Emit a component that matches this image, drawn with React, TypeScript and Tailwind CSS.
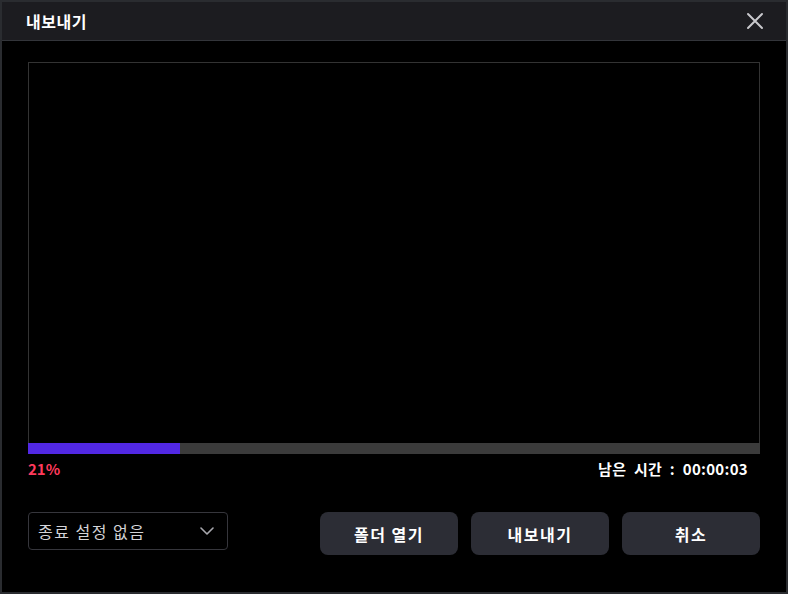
import React from "react";

const font = { fontFamily: '"Noto Sans CJK KR", "Noto Sans", sans-serif' };

function CloseIcon() {
  return (
    <svg width="18" height="18" viewBox="0 0 18 18" fill="none">
      <path d="M2 2L16 16M16 2L2 16" stroke="#c8c8cc" strokeWidth="2" strokeLinecap="round" />
    </svg>
  );
}

function Chevron() {
  return (
    <svg width="14" height="8" viewBox="0 0 14 8" fill="none">
      <path d="M1 1L7 7L13 1" stroke="#a8a8ae" strokeWidth="1.6" strokeLinecap="round" strokeLinejoin="round" />
    </svg>
  );
}

const btn =
  "w-[138px] h-[43px] rounded-[8px] bg-[#2c2d35] text-white text-[16px] font-bold tracking-[1.5px]";

export default function App() {
  const percentage = 21;
  return (
    <div className="w-[788px] h-[594px] bg-[#2a2c30] p-[2px] box-border" style={font}>
      <div className="flex flex-col w-full h-full bg-black">
        <div className="flex items-center justify-between h-[39px] bg-[#1c1c20] border-b border-[#33353a] pl-[24px] pr-[22px]">
          <span className="text-[16px] font-bold text-white tracking-[0.5px]">내보내기</span>
          <CloseIcon />
        </div>
        <div className="flex flex-col px-[26px] pt-[21px]">
          <div className="h-[381px] border border-b-0 border-[#333] bg-black" />
          <div className="h-[11px] bg-[#3b3b3b]">
            <div className="h-full bg-[#5228e4]" style={{ width: `${(percentage / 100) * (152 / 732) / 0.21 * 100}%` }} />
          </div>
          <div className="flex justify-between items-center mt-[5px] pr-[12px] leading-[20px]">
            <span className="text-[15px] font-bold text-[#ff3a5c]">{percentage}%</span>
            <span className="text-[15px] font-bold text-white tracking-[0.3px] [word-spacing:4px]">남은 시간 : 00:00:03</span>
          </div>
          <div className="flex items-start justify-between mt-[33px]">
            <div className="flex items-center justify-between w-[200px] h-[38px] border border-[#36363c] rounded-[4px] pl-[9px] pr-[13px]">
              <span className="text-[16px] text-[#d4d4d8] tracking-[1.5px]">종료 설정 없음</span>
              <Chevron />
            </div>
            <div className="flex gap-[13px]">
              <button className={btn}>폴더 열기</button>
              <button className={btn}>내보내기</button>
              <button className={btn}>취소</button>
            </div>
          </div>
        </div>
      </div>
    </div>
  );
}
